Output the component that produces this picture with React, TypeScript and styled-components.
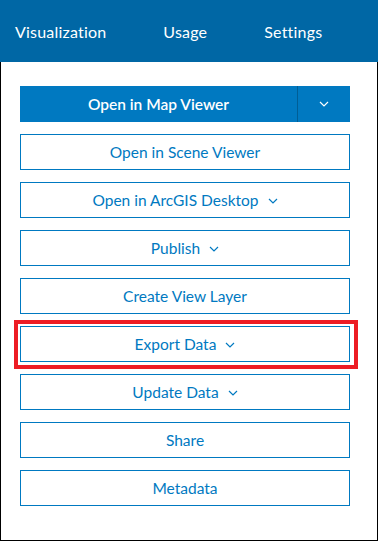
import React from "react";
import styled, { createGlobalStyle } from "styled-components";

const colors = {
  header: "#0067a5",
  primary: "#0079c1",
  primaryDark: "#005e95",
  highlight: "#ed1c24",
};

const GlobalStyle = createGlobalStyle`
  html, body {
    margin: 0;
    padding: 0;
    background: #ffffff;
  }
  body {
    font-family: Lato, "Noto Sans", "Liberation Sans", sans-serif;
  }
`;

const actions = [
  { label: "Open in Scene Viewer", dropdown: false },
  { label: "Open in ArcGIS Desktop", dropdown: true },
  { label: "Publish", dropdown: true },
  { label: "Create View Layer", dropdown: false },
  { label: "Export Data", dropdown: true, highlighted: true },
  { label: "Update Data", dropdown: true },
  { label: "Share", dropdown: false },
  { label: "Metadata", dropdown: false },
];

function Chevron({ color }: { color: string }) {
  return (
    <svg width="10" height="6" viewBox="0 0 10 6" fill="none">
      <path d="M1 1 L5 5 L9 1" stroke={color} strokeWidth="1.2" />
    </svg>
  );
}

export default function App() {
  return (
    <>
      <GlobalStyle />
      <Frame>
        <Tabs>
          <Tab>Visualization</Tab>
          <Tab>Usage</Tab>
          <Tab>Settings</Tab>
        </Tabs>
        <ActionList>
          <SplitButton>
            <MainPart>Open in Map Viewer</MainPart>
            <ArrowPart>
              <Chevron color="#ffffff" />
            </ArrowPart>
          </SplitButton>
          {actions.map((a) => (
            <OutlineButton key={a.label} $highlighted={a.highlighted}>
              {a.label}
              {a.dropdown && <Chevron color={colors.primary} />}
            </OutlineButton>
          ))}
        </ActionList>
      </Frame>
    </>
  );
}

const Frame = styled.div`
  width: 378px;
  height: 541px;
  box-sizing: border-box;
  border: 1px solid #000000;
  display: flex;
  flex-direction: column;
  background: #ffffff;
`;

const Tabs = styled.nav`
  height: 62px;
  flex-shrink: 0;
  background-color: ${colors.header};
  display: flex;
  align-items: center;
  gap: 57px;
  padding-left: 15px;
  margin: -1px -1px 0 -1px;
`;

const Tab = styled.span`
  color: #ffffff;
  font-size: 16px;
  font-weight: 400;
  letter-spacing: 0.2px;
`;

const ActionList = styled.div`
  display: flex;
  flex-direction: column;
  gap: 12px;
  padding: 24px 0 0 19px;
  width: 330px;
`;

const SplitButton = styled.div`
  display: flex;
  height: 36px;
  background-color: ${colors.primary};
`;

const MainPart = styled.div`
  flex: 1;
  display: flex;
  align-items: center;
  justify-content: center;
  color: #ffffff;
  font-size: 15.5px;
  font-weight: 600;
  border-right: 1px solid ${colors.primaryDark};
`;

const ArrowPart = styled.div`
  width: 52px;
  display: flex;
  align-items: center;
  justify-content: center;
`;

const OutlineButton = styled.div<{ $highlighted?: boolean }>`
  position: relative;
  height: 36px;
  box-sizing: border-box;
  border: 1px solid ${colors.primary};
  display: flex;
  align-items: center;
  justify-content: center;
  gap: 9px;
  color: ${colors.primary};
  font-size: 15.5px;
  svg {
    margin-top: 1px;
  }
  &::after {
    content: "";
    display: ${(p) => (p.$highlighted ? "block" : "none")};
    position: absolute;
    top: -7px;
    left: -7px;
    right: -9px;
    bottom: -8px;
    border: 4px solid ${colors.highlight};
  }
`;
